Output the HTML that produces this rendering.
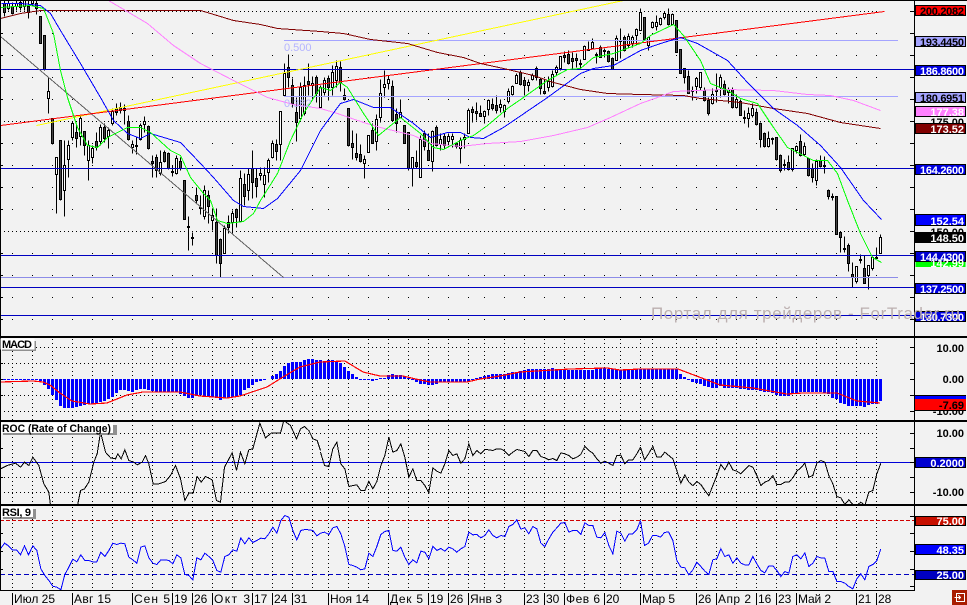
<!DOCTYPE html>
<html>
<head>
<meta charset="utf-8">
<title>Chart</title>
<style>
html,body{margin:0;padding:0;background:#f2f2f2;width:967px;height:605px;overflow:hidden}
svg{display:block;font-family:"Liberation Sans",sans-serif}
.l{font-weight:bold;font-size:11px;text-anchor:end}
.t{font-size:12px;fill:#000}
.p{fill:none;shape-rendering:crispEdges}
</style>
</head>
<body>
<svg width="967" height="605" viewBox="0 0 967 605" xmlns="http://www.w3.org/2000/svg">
<defs>
<clipPath id="cm"><rect x="1" y="1" width="913" height="335"/></clipPath>
<clipPath id="c1"><rect x="1" y="339" width="913" height="81"/></clipPath>
<clipPath id="c2"><rect x="1" y="422" width="913" height="82"/></clipPath>
<clipPath id="c3"><rect x="1" y="506" width="913" height="84"/></clipPath>
<path id="g" d="M12.5 0V590M32.5 0V590M52.5 0V590M72.5 0V590M92.5 0V590M112.5 0V590M132.5 0V590M152.5 0V590M172.5 0V590M192.5 0V590M212.5 0V590M232.5 0V590M252.5 0V590M272.5 0V590M292.5 0V590M312.5 0V590M328.5 0V590M348.5 0V590M368.5 0V590M388.5 0V590M408.5 0V590M428.5 0V590M448.5 0V590M468.5 0V590M484.5 0V590M504.5 0V590M524.5 0V590M544.5 0V590M564.5 0V590M584.5 0V590M604.5 0V590M620.5 0V590M640.5 0V590M652.5 0V590M676.5 0V590M696.5 0V590M716.5 0V590M736.5 0V590M756.5 0V590M776.5 0V590M796.5 0V590M816.5 0V590M836.5 0V590M856.5 0V590M876.5 0V590"/>
</defs>
<rect width="967" height="605" fill="#f2f2f2"/>

<!-- dot grids -->
<g clip-path="url(#cm)"><use href="#g" stroke="#000" fill="none" stroke-dasharray="1 21" stroke-dashoffset="11"/></g>
<g clip-path="url(#c1)"><use href="#g" stroke="#000" fill="none" stroke-dasharray="1 3" stroke-dashoffset="1"/></g>
<g clip-path="url(#c2)"><use href="#g" stroke="#000" fill="none" stroke-dasharray="1 3" stroke-dashoffset="3"/></g>
<g clip-path="url(#c3)"><use href="#g" stroke="#000" fill="none" stroke-dasharray="1 3" stroke-dashoffset="1"/></g>
<path d="M0 11.5H880M0 121.5H880M0 231.5H880M0 347.5H880M0 363.5H880M0 395.5H880M0 411.5H880M0 433.5H880M0 477.5H880M0 492.5H880" stroke="#000" fill="none" stroke-dasharray="1 3"/>

<!-- main panel -->
<g clip-path="url(#cm)">
<g transform="translate(.5 .5)" class="p">
<!-- wicks -->
<path stroke="#000" d="M4 0V16M8 0V10M12 2V14M16 0V10M20 0V10M24 0V10M28 0V18M32 0V5M36 0V14M40 16V43M44 35V70M48 77V113M52 118V144M56 157V213M60 140V200M64 140V216M68 140V177M72 121V140M76 123V147M80 114V145M84 131V155M88 140V180M92 145V163M96 132V150M100 124V145M104 123V142M108 127V148M112 108V125M116 103V115M120 102V113M124 104V124M128 115V140M132 140V153M136 136V154M140 123V140M144 116V132M148 125V149M152 155V177M156 154V177M160 150V175M164 150V162M168 152V169M172 165V176M176 155V174M180 157V170M184 180V219M188 216V250M192 232V245M196 187V203M200 195V214M204 185V219M208 190V223M212 208V230M216 208V263M220 238V277M224 225V253M228 215V233M232 210V233M236 208V227M240 170V222M244 173V205M248 168V200M252 150V198M256 168V197M260 167V180M264 167V197M268 158V182M272 140V158M276 139V160M280 111V160M284 63V95M288 54V87M292 78V107M296 97V141M300 82V118M304 76V115M308 63V95M312 76V100M316 75V102M320 85V107M324 77V95M328 75V100M332 65V95M336 60V87M340 61V91M344 88V100M348 108V146M352 130V159M356 133V160M360 144V162M364 155V178M368 135V152M372 123V143M376 114V150M380 79V122M384 70V97M388 75V89M392 80V121M396 108V132M400 99V118M404 125V143M408 132V170M412 157V186M416 150V168M420 135V177M424 130V150M428 133V160M432 130V171M436 125V146M440 133V150M444 133V148M448 133V147M452 133V147M456 142V148M460 137V163M464 133V148M468 108V133M472 106V122M476 102V120M480 105V116M484 110V123M488 99V115M492 98V110M496 95V113M500 99V112M504 104V117M508 88V103M512 85V95M516 73V83M520 70V85M524 77V95M528 79V91M532 73V80M536 66V80M540 77V94M544 79V94M548 76V91M552 70V87M556 65V75M560 56V70M564 51V62M568 50V64M572 52V68M576 53V67M580 59V68M584 45V59M588 41V50M592 38V48M596 52V63M600 45V57M604 48V57M608 50V62M612 57V69M616 35V60M620 28V58M624 35V51M628 33V48M632 35V47M636 28V45M640 8V30M644 17V40M648 36V50M652 21V28M656 15V30M660 17V25M664 11V19M668 8V25M672 13V25M676 20V52M680 49V73M684 68V83M688 70V93M692 86V100M696 77V93M700 72V90M704 87V101M708 97V115M712 88V104M716 73V102M720 74V97M724 80V95M728 87V103M732 87V108M736 94V108M740 99V115M744 110V123M748 107V127M752 103V117M756 108V125M760 122V147M764 132V147M768 131V147M772 137V144M776 137V160M780 154V172M784 159V170M788 155V170M792 148V171M796 145V153M800 134V156M804 142V155M808 158V176M812 163V182M816 159V185M820 155V167M824 156V173M828 189V199M832 193V200M836 196V234M840 232V252M844 236V252M848 243V271M852 262V287M856 266V283M860 254V263M864 255V283M868 265V289M872 256V270M876 247V258M880 234V253"/>
<!-- black bodies -->
<path stroke="#000" fill="#444" d="M3 3h2V12h-2zM11 6h2V13h-2zM19 2h2V7h-2zM27 6h2V12h-2zM35 3h2V8h-2zM39 16h2V43h-2zM43 35h2V69h-2zM51 118h2V143h-2zM59 140h2V199h-2zM75 132h2V138h-2zM83 131h2V145h-2zM95 141h2V147h-2zM103 127h2V138h-2zM115 108h2V112h-2zM119 107h2V110h-2zM123 108h2V110h-2zM127 121h2V139h-2zM135 145h2V146h-2zM147 126h2V148h-2zM151 161h2V163h-2zM155 157h2V170h-2zM163 152h2V161h-2zM167 153h2V168h-2zM171 171h2V172h-2zM179 161h2V168h-2zM183 180h2V219h-2zM187 226h2V227h-2zM191 237h2V238h-2zM195 195h2V200h-2zM199 207h2V208h-2zM207 195h2V206h-2zM215 222h2V255h-2zM219 239h2V263h-2zM227 222h2V227h-2zM235 209h2V217h-2zM243 184h2V196h-2zM251 168h2V182h-2zM255 178h2V186h-2zM275 144h2V151h-2zM287 67h2V77h-2zM291 85h2V103h-2zM295 112h2V122h-2zM307 81h2V84h-2zM315 77h2V93h-2zM327 78h2V87h-2zM339 67h2V82h-2zM343 95h2V99h-2zM347 108h2V145h-2zM351 143h2V147h-2zM355 153h2V157h-2zM359 154h2V161h-2zM371 130h2V143h-2zM391 86h2V120h-2zM395 114h2V123h-2zM403 125h2V143h-2zM407 132h2V168h-2zM415 162h2V166h-2zM423 133h2V146h-2zM427 150h2V160h-2zM435 127h2V145h-2zM443 136h2V145h-2zM455 143h2V146h-2zM471 109h2V112h-2zM475 111h2V113h-2zM479 113h2V116h-2zM491 104h2V108h-2zM495 105h2V110h-2zM519 72h2V84h-2zM523 80h2V85h-2zM535 68h2V77h-2zM539 79h2V88h-2zM543 91h2V93h-2zM563 55h2V57h-2zM567 54h2V63h-2zM571 58h2V61h-2zM575 58h2V60h-2zM579 63h2V64h-2zM587 49h2V50h-2zM595 54h2V55h-2zM599 47h2V57h-2zM603 50h2V51h-2zM607 51h2V61h-2zM611 58h2V69h-2zM619 40h2V41h-2zM623 37h2V50h-2zM643 17h2V39h-2zM667 14h2V24h-2zM675 20h2V52h-2zM679 49h2V73h-2zM683 68h2V77h-2zM687 76h2V93h-2zM691 90h2V91h-2zM703 90h2V100h-2zM707 100h2V113h-2zM715 90h2V91h-2zM723 84h2V94h-2zM731 89h2V107h-2zM739 101h2V115h-2zM743 117h2V118h-2zM755 112h2V124h-2zM759 123h2V139h-2zM763 133h2V146h-2zM771 138h2V139h-2zM775 137h2V159h-2zM779 155h2V170h-2zM783 164h2V165h-2zM787 162h2V169h-2zM799 141h2V155h-2zM807 158h2V175h-2zM811 168h2V177h-2zM819 160h2V166h-2zM823 165h2V166h-2zM827 190h2V196h-2zM831 196h2V197h-2zM835 196h2V234h-2zM839 232h2V237h-2zM843 248h2V249h-2zM847 245h2V263h-2zM851 274h2V277h-2zM859 259h2V260h-2zM863 268h2V283h-2zM875 257h2V258h-2z"/>
<!-- white bodies -->
<path stroke="#000" fill="#fff" d="M7 3h2V8h-2zM15 3h2V6h-2zM23 0h2V6h-2zM31 0h2V3h-2zM47 91h2V98h-2zM55 157h2V174h-2zM63 165h2V190h-2zM67 145h2V159h-2zM71 123h2V137h-2zM79 118h2V136h-2zM87 145h2V160h-2zM91 148h2V157h-2zM99 127h2V141h-2zM107 130h2V136h-2zM111 111h2V123h-2zM131 144h2V147h-2zM139 125h2V139h-2zM143 121h2V124h-2zM159 162h2V173h-2zM175 158h2V173h-2zM203 190h2V216h-2zM211 215h2V220h-2zM223 228h2V253h-2zM231 213h2V222h-2zM239 178h2V221h-2zM247 174h2V190h-2zM259 173h2V175h-2zM263 175h2V184h-2zM267 160h2V172h-2zM271 143h2V157h-2zM279 111h2V144h-2zM283 73h2V95h-2zM299 87h2V118h-2zM303 85h2V113h-2zM311 83h2V85h-2zM319 87h2V107h-2zM323 80h2V92h-2zM331 72h2V87h-2zM335 66h2V80h-2zM363 159h2V163h-2zM367 135h2V152h-2zM375 119h2V141h-2zM379 93h2V117h-2zM383 84h2V87h-2zM387 79h2V83h-2zM399 112h2V117h-2zM411 157h2V168h-2zM419 139h2V177h-2zM431 131h2V161h-2zM439 139h2V144h-2zM447 136h2V141h-2zM451 136h2V139h-2zM459 140h2V148h-2zM463 137h2V139h-2zM467 110h2V133h-2zM483 111h2V116h-2zM487 100h2V109h-2zM499 104h2V107h-2zM503 105h2V111h-2zM507 91h2V101h-2zM511 86h2V94h-2zM515 75h2V83h-2zM527 82h2V85h-2zM531 75h2V79h-2zM547 81h2V87h-2zM551 74h2V86h-2zM555 67h2V72h-2zM559 56h2V68h-2zM583 46h2V59h-2zM591 42h2V48h-2zM615 38h2V60h-2zM627 36h2V45h-2zM631 37h2V43h-2zM635 29h2V35h-2zM639 12h2V30h-2zM647 37h2V45h-2zM651 22h2V27h-2zM655 22h2V26h-2zM659 18h2V24h-2zM663 13h2V17h-2zM671 14h2V24h-2zM695 78h2V86h-2zM699 72h2V87h-2zM711 94h2V103h-2zM719 77h2V87h-2zM727 89h2V92h-2zM735 99h2V107h-2zM747 113h2V118h-2zM751 108h2V115h-2zM767 138h2V146h-2zM791 148h2V169h-2zM795 146h2V150h-2zM803 146h2V154h-2zM815 161h2V180h-2zM855 266h2V281h-2zM867 265h2V275h-2zM871 257h2V268h-2zM879 237h2V253h-2z"/>
</g>

<!-- horizontal levels -->
<g class="p">
<path d="M284 40.5H898M284 96.5H898" stroke="#a4a4ff"/>
<path d="M0 277.5H898" stroke="#8c8ce8"/>
<path d="M0 69.5H914M0 168.5H914M0 255.5H914M0 287.5H914M0 315.5H914" stroke="#0000c0"/>
</g>
<g fill="none" transform="translate(.5 .5)">
<path d="M0 36L283 277" stroke="#606060" shape-rendering="crispEdges"/>
<path d="M36 125L623 0" stroke="#ffff00" shape-rendering="crispEdges"/>
<path d="M0 125L884 11" stroke="#ff0000" shape-rendering="crispEdges"/>
<polyline stroke="#800000" shape-rendering="crispEdges" points="0,18 20,13 40,10 200,10 210,13 233,20 260,24 277,28 320,31 343,33 370,39 407,43 437,52 463,57 480,63 503,68 533,75 553,82 580,89 607,93 640,94 683,95 700,98 740,102 773,108 807,113 840,122 880,128"/>
<polyline stroke="#ff80ff" shape-rendering="crispEdges" points="108,0 147,23 173,45 200,63 233,80 267,97 293,104 320,108 337,113 363,122 380,127 413,135 430,143 460,146 487,143 520,141 553,135 587,127 610,117 640,103 657,97 673,91 723,89 773,90 807,94 830,95 853,100 880,110"/>
<polyline stroke="#0000ff" shape-rendering="crispEdges" points="1,3 20,3 40,5 50,13 60,30 80,63 100,97 113,120 127,133 140,138 150,133 180,142 200,163 213,177 233,200 243,206 263,208 277,198 300,170 320,130 340,103 353,99 373,107 390,107 413,123 430,137 447,132 460,132 470,137 483,138 503,127 547,97 580,73 593,68 613,65 640,50 660,43 680,37 697,43 727,60 747,82 773,108 797,125 820,145 840,167 863,200 881,219"/>
<polyline stroke="#00ff00" shape-rendering="crispEdges" points="0,7 30,5 43,8 53,33 60,70 67,97 77,127 87,145 97,147 107,137 127,127 140,127 150,132 170,150 180,155 190,177 203,193 210,200 217,220 227,223 243,221 253,213 260,200 277,173 290,140 303,113 320,87 330,90 340,82 347,87 363,113 378,135 400,117 420,133 433,147 443,149 460,140 473,135 487,125 507,108 523,97 547,80 567,69 580,68 593,57 613,53 640,43 650,35 673,24 683,35 700,60 710,83 727,90 740,98 757,103 773,127 787,147 807,157 813,160 827,160 837,173 847,200 860,233 872,257 881,262"/>
</g>
<text x="284" y="51" font-size="11" fill="#b4b4ff">0.500</text>
<text x="284" y="107" font-size="11" fill="#b4b4ff">0.382</text>
</g>

<!-- MACD -->
<g clip-path="url(#c1)">
<path class="p" stroke="#0000ff" stroke-width="3" transform="translate(.5 0)" d="M4 379V380M8 379V380M12 379V380M16 379V380M20 379V380M24 379V380M28 379V380M32 379V380M36 379V380M40 379V381M44 379V385M48 379V389M52 379V395M56 379V400M60 379V406M64 379V408M68 379V408M72 379V408M76 379V407M80 379V406M84 379V405M88 379V404M92 379V404M96 379V403M100 379V402M104 379V401M108 379V399M112 379V397M116 379V393M120 379V390M124 379V390M128 379V391M132 379V392M136 379V390M140 379V389M144 379V389M148 379V390M152 379V391M156 379V392M160 379V392M164 379V392M168 379V392M172 379V392M176 379V392M180 379V394M184 379V396M188 379V398M192 379V398M196 379V396M200 379V395M204 379V396M208 379V397M212 379V397M216 379V398M220 379V400M224 379V398M228 379V398M232 379V397M236 379V396M240 379V395M244 379V390M248 379V388M252 379V385M256 379V382M260 379V381M264 379V380M272 379V376M276 379V374M280 379V371M284 379V366M288 379V363M292 379V362M296 379V362M300 379V362M304 379V360M308 379V359M312 379V359M316 379V360M320 379V360M324 379V361M328 379V360M332 379V360M336 379V362M340 379V363M344 379V367M348 379V371M352 379V374M356 379V377M360 379V380M364 379V380M368 379V380M372 379V381M376 379V380M380 379V378M384 379V378M388 379V375M392 379V374M396 379V375M400 379V375M404 379V376M408 379V378M412 379V380M416 379V382M420 379V384M424 379V384M428 379V385M432 379V385M436 379V384M440 379V382M444 379V382M448 379V382M452 379V382M456 379V382M460 379V382M464 379V382M468 379V382M472 379V380M476 379V378M480 379V377M484 379V376M488 379V375M492 379V374M496 379V374M500 379V374M504 379V374M508 379V373M512 379V372M516 379V372M520 379V371M524 379V370M528 379V369M532 379V369M536 379V369M540 379V369M544 379V369M548 379V369M552 379V368M556 379V369M560 379V370M564 379V370M568 379V370M572 379V370M576 379V370M580 379V370M584 379V370M588 379V370M592 379V370M596 379V368M600 379V368M604 379V368M608 379V369M612 379V369M616 379V369M620 379V370M624 379V370M628 379V370M632 379V369M636 379V369M640 379V369M644 379V369M648 379V369M652 379V369M656 379V369M660 379V369M664 379V369M668 379V369M672 379V369M676 379V369M680 379V374M684 379V377M688 379V380M692 379V382M696 379V383M700 379V384M704 379V386M708 379V387M712 379V388M716 379V388M720 379V386M724 379V388M728 379V388M732 379V388M736 379V388M740 379V389M744 379V389M748 379V390M752 379V390M756 379V390M760 379V391M764 379V392M768 379V392M772 379V393M776 379V395M780 379V396M784 379V396M788 379V396M792 379V393M796 379V393M800 379V392M804 379V392M808 379V392M812 379V392M816 379V392M820 379V392M824 379V393M828 379V394M832 379V398M836 379V399M840 379V403M844 379V404M848 379V406M852 379V406M856 379V406M860 379V406M864 379V407M868 379V405M872 379V404M876 379V404M880 379V401"/>
<polyline fill="none" stroke="#ff0000" stroke-width="1.2" shape-rendering="crispEdges" points="0,382 33,381 43,382 50,385 60,393 72,401 90,404 107,403 127,395 143,392 180,392 200,396 227,398 240,396 267,387 283,377 300,367 320,362 345,361 363,372 380,376 403,376 420,380 430,382 467,382 480,379 500,376 520,372 553,370 570,369 607,368 620,370 640,369 678,369 707,380 720,385 753,388 787,394 803,393 837,393 857,401 880,403"/>
</g>

<!-- ROC -->
<g clip-path="url(#c2)">
<path class="p" d="M0 462.5H914" stroke="#0000d8"/>
<g fill="none" stroke="#000" stroke-width="3" shape-rendering="crispEdges">
<polyline transform="translate(.5 420.5) scale(.33333)" points="0,145 20,135 45,128 60,140 72,125 85,135 97,110 115,135 130,190 145,215 152,270 228,270 240,210 252,205 265,185 280,125 290,100 300,35 315,95 330,112 345,115 352,100 362,115 373,88 385,120 400,125 410,133 425,125 435,105 445,130 458,190 475,190 495,183 510,165 525,135 540,175 553,240 565,218 578,218 590,168 602,185 615,168 635,178 648,240 660,245 672,140 695,97 708,150 720,95 733,130 745,88 757,85 778,8 795,52 812,38 840,38 850,0 870,15 888,55 900,25 912,18 925,30 937,55 950,60 960,90"/>
<polyline transform="translate(320.5 420.5) scale(.33333)" points="0,95 12,135 25,138 37,85 49,65 61,130 73,145 85,198 97,195 109,193 121,210 133,210 145,183 157,205 169,183 181,135 193,105 205,50 217,95 229,90 241,70 253,110 265,170 277,145 289,180 301,180 313,195 325,217 337,142 349,152 361,158 373,130 385,90 397,105 409,100 421,128 433,115 445,70 457,105 469,90 481,100 493,87 505,88 517,90 529,85 541,85 553,92 565,105 577,95 589,87 601,90 613,93 625,108 637,90 649,90 661,108 673,112 685,118 697,114 709,120 721,97 733,100 745,105 757,115 769,110 781,102 793,78 805,90 817,98 829,115 841,128 853,122 865,128 877,135 889,105 901,104 913,130 925,118 937,118 949,100 960,80"/>
<polyline transform="translate(640.5 420.5) scale(.33333)" points="0,80 12,118 24,100 37,78 49,110 61,110 73,95 85,105 97,115 109,150 121,188 133,163 145,185 157,195 169,183 181,192 193,210 205,226 217,195 229,165 241,132 253,148 265,125 277,148 289,152 301,160 313,148 325,135 337,140 349,165 361,195 373,185 385,180 397,165 409,192 421,192 433,185 445,185 457,172 469,152 481,142 493,128 505,170 517,165 529,128 541,120 553,125 565,165 577,190 589,228 601,232 613,252 625,238 637,252 649,255 661,245 673,255 685,215 697,210 709,160 721,128"/>
</g>
</g>

<!-- RSI -->
<g clip-path="url(#c3)">
<path class="p" d="M0 520.5H914" stroke="#d00000" stroke-dasharray="4 2"/>
<path class="p" d="M0 574.5H914" stroke="#0000c0" stroke-dasharray="5 3"/>
<g fill="none" stroke="#0000ff" stroke-width="3" shape-rendering="crispEdges">
<polyline transform="translate(.5 420.5) scale(.33333)" points="0,385 12,368 24,376 36,388 48,388 60,403 72,376 84,403 97,376 109,390 121,445 133,465 145,480 157,497 169,500 181,508 193,462 205,440 217,416 229,424 241,403 253,420 265,420 277,424 289,424 301,395 313,408 325,390 337,368 349,372 361,368 373,370 385,410 397,418 409,428 421,380 433,376 445,412 457,428 469,432 481,418 493,418 505,420 517,430 529,403 541,412 553,462 565,465 577,478 589,412 601,418 613,398 625,408 637,420 649,450 661,455 673,408 685,403 697,388 709,392 721,352 733,370 745,352 757,366 769,360 781,353 793,355 805,340 817,320 829,338 841,300 853,285 865,290 877,330 889,358 901,330 913,327 925,328 937,330 949,346 960,338"/>
<polyline transform="translate(320.5 420.5) scale(.33333)" points="0,338 12,335 25,342 37,322 49,318 61,340 73,378 85,432 97,435 109,440 121,448 133,445 145,398 157,408 169,378 181,342 193,333 205,330 217,390 229,392 241,380 253,410 265,432 277,418 289,427 301,392 313,395 325,415 337,378 349,390 361,384 373,392 385,380 397,385 409,395 421,385 433,378 445,335 457,343 469,342 481,352 493,345 505,328 517,345 529,352 541,345 553,348 565,318 577,312 589,298 601,326 613,322 625,340 637,318 649,325 661,368 673,378 685,355 697,335 709,322 721,308 733,306 745,335 757,330 769,330 781,342 793,307 805,315 817,315 829,350 841,352 853,336 865,375 877,400 889,332 901,338 913,362 925,340 937,340 949,328 960,300"/>
<polyline transform="translate(640.5 420.5) scale(.33333)" points="0,300 12,375 24,368 36,345 48,345 60,350 72,336 84,334 97,360 109,420 121,440 133,442 145,463 157,448 169,425 181,438 193,452 205,462 217,418 229,415 241,385 253,408 265,403 277,428 289,412 301,428 313,433 325,433 337,408 349,430 361,450 373,457 385,436 397,436 409,450 421,468 433,453 445,458 457,408 469,403 481,415 493,397 505,438 517,428 529,408 541,412 553,413 565,453 577,453 589,483 601,483 613,488 625,498 637,505 649,475 661,460 673,478 685,438 697,432 709,420 721,385"/>
</g>
</g>

<!-- frames -->
<g fill="#000" shape-rendering="crispEdges">
<rect x="0" y="0" width="967" height="1"/>
<rect x="0" y="0" width="1" height="591"/>
<rect x="0" y="336" width="967" height="2"/>
<rect x="0" y="420" width="967" height="2"/>
<rect x="0" y="504" width="967" height="2"/>
<rect x="0" y="590" width="915" height="1"/>
<rect x="914" y="0" width="1" height="591"/>
</g>
<path class="p" stroke="#000" d="M910 11.5h4M910 33.5h4M910 55.5h4M910 77.5h4M910 99.5h4M910 121.5h4M910 143.5h4M910 165.5h4M910 187.5h4M910 209.5h4M910 231.5h4M910 253.5h4M910 275.5h4M910 297.5h4M910 319.5h4M910 347.5h4M910 363.5h4M910 379.5h4M910 395.5h4M910 411.5h4M910 433.5h4M910 448.5h4M910 462.5h4M910 477.5h4M910 492.5h4M910 516.5h4M910 533.5h4M910 551.5h4M910 569.5h4M910 586.5h4M1 33.5h2M1 55.5h2M1 77.5h2M1 99.5h2M1 143.5h2M1 165.5h2M1 187.5h2M1 209.5h2M1 253.5h2M1 275.5h2M1 297.5h2M1 319.5h2M1 363.5h2M1 379.5h2M1 395.5h2M1 448.5h2M1 477.5h2M1 533.5h2M1 551.5h2M1 569.5h2"/>

<!-- panel title tags -->
<g shape-rendering="crispEdges">
<rect x="2" y="341" width="34" height="10" fill="#909090"/>
<rect x="1" y="339" width="33" height="10" fill="#fff" stroke="#fff"/>
<rect x="3" y="425" width="114" height="10" fill="#909090"/>
<rect x="1" y="423" width="112" height="10" fill="#fff"/>
<rect x="3" y="509" width="33" height="10" fill="#909090"/>
<rect x="1" y="507" width="32" height="10" fill="#fff"/>
</g>
<g font-size="11" font-weight="bold" fill="#000">
<text x="2" y="348" textLength="30">MACD</text>
<text x="2" y="432" textLength="109" lengthAdjust="spacingAndGlyphs">ROC (Rate of Change)</text>
<text x="2" y="516" textLength="29">RSI, 9</text>
</g>

<!-- axis labels -->
<g shape-rendering="crispEdges" stroke="#000">
<rect x="915.5" y="5.5" width="50" height="10" fill="#ff0000"/>
<rect x="915.5" y="36.5" width="50" height="10" fill="#a4a4ff"/>
<rect x="915.5" y="65.5" width="50" height="10" fill="#0000e0"/>
<rect x="915.5" y="92.5" width="50" height="10" fill="#a4a4ff"/>
<rect x="915.5" y="106.5" width="50" height="10" fill="#ff80ff"/>
</g>
<text class="l" x="964" y="126" fill="#000">175.00</text>
<text class="l" x="964" y="236" fill="#000">150.00</text>
<g shape-rendering="crispEdges" stroke="#000">
<rect x="915.5" y="123.5" width="50" height="10" fill="#800000"/>
<rect x="915.5" y="164.5" width="50" height="10" fill="#0000e0"/>
<rect x="915.5" y="214.5" width="50" height="11" fill="#0000ff"/>
<rect x="915.5" y="232.5" width="50" height="10" fill="#000"/>
<rect x="915.5" y="262" width="50" height="5" fill="#00ff00" stroke="none"/>
<rect x="915.5" y="251.5" width="50" height="10" fill="#0000d0"/>
<rect x="915.5" y="283.5" width="50" height="10" fill="#0000e0"/>
<rect x="915.5" y="311.5" width="50" height="10" fill="#0000e0"/>
</g>
<text class="l" x="964" y="15" fill="#000" textLength="44">200.2082</text>
<text class="l" x="964" y="46" fill="#000" textLength="44">193.4450</text>
<text class="l" x="964" y="75" fill="#fff" textLength="44">186.8600</text>
<text class="l" x="964" y="102" fill="#000" textLength="44">180.6951</text>
<text class="l" x="964" y="116" fill="#fff">177.38</text>
<text class="l" x="964" y="133" fill="#fff">173.52</text>
<text class="l" x="964" y="174" fill="#fff" textLength="44">164.2600</text>
<text class="l" x="964" y="225" fill="#fff">152.54</text>
<text class="l" x="964" y="242" fill="#fff">148.50</text>
<text class="l" x="964" y="261" fill="#fff" textLength="44">144.4300</text>
<text class="l" x="964" y="267" fill="#fff" style="clip-path:inset(0 0 1px 0)">142.99</text>
<text class="l" x="964" y="293" fill="#fff" textLength="44">137.2500</text>
<text class="l" x="964" y="321" fill="#fff" textLength="44">130.7300</text>

<text class="l" x="964" y="352" fill="#000">10.00</text>
<text class="l" x="964" y="383" fill="#000">0.00</text>
<text class="l" x="964" y="415" fill="#000">-10.00</text>
<g shape-rendering="crispEdges">
<rect x="915" y="396" width="51" height="3" fill="#0000ff"/>
<rect x="915" y="399" width="51" height="11" fill="#ff0000"/>
<rect x="915" y="410" width="51" height="1" fill="#000"/>
<rect x="915" y="395" width="51" height="1" fill="#000"/>
</g>
<text class="l" x="964" y="409" fill="#000">-7.69</text>

<text class="l" x="964" y="437" fill="#000">10.00</text>
<text class="l" x="964" y="496" fill="#000">-10.00</text>
<rect x="915.5" y="457.5" width="50" height="10" fill="#0000d0" stroke="#000" shape-rendering="crispEdges"/>
<text class="l" x="964" y="467" fill="#fff">0.2000</text>

<g shape-rendering="crispEdges" stroke="#000">
<rect x="915.5" y="516.5" width="50" height="9" fill="#c81000"/>
<rect x="915.5" y="544.5" width="50" height="10" fill="#0000ff"/>
<rect x="915.5" y="570.5" width="50" height="9" fill="#0000c0"/>
</g>
<text class="l" x="964" y="525" fill="#fff">75.00</text>
<text class="l" x="964" y="554" fill="#fff">48.35</text>
<text class="l" x="964" y="579" fill="#fff">25.00</text>

<!-- watermark -->
<text x="651" y="319" font-size="17" fill="#bcb0b0" textLength="309">Портал для трейдеров - ForTrader.ru</text>

<!-- time axis -->
<path class="p" stroke="#000" d="M12.5 593V605M72.5 593V605M132.5 593V605M172.5 593V605M192.5 593V605M212.5 593V605M252.5 593V605M272.5 593V605M292.5 593V605M328.5 593V605M388.5 593V605M428.5 593V605M448.5 593V605M468.5 593V605M524.5 593V605M544.5 593V605M564.5 593V605M604.5 593V605M640.5 593V605M696.5 593V605M716.5 593V605M756.5 593V605M776.5 593V605M796.5 593V605M856.5 593V605M876.5 593V605"/>
<g class="t">
<text class="t" x="14" y="603" textLength="41">Июл 25</text>
<text class="t" x="74" y="603" textLength="37">Авг 15</text>
<text class="t" x="134" y="603" textLength="36">Сен 5</text>
<text class="t" x="174" y="603">19</text>
<text class="t" x="194" y="603">26</text>
<text class="t" x="214" y="603" textLength="36">Окт 3</text>
<text class="t" x="254" y="603">17</text>
<text class="t" x="274" y="603">24</text>
<text class="t" x="294" y="603">31</text>
<text class="t" x="330" y="603" textLength="39">Ноя 14</text>
<text class="t" x="390" y="603" textLength="33">Дек 5</text>
<text class="t" x="430" y="603">19</text>
<text class="t" x="450" y="603">26</text>
<text class="t" x="470" y="603" textLength="32">Янв 3</text>
<text class="t" x="526" y="603">23</text>
<text class="t" x="546" y="603">30</text>
<text class="t" x="566" y="603" textLength="34">Фев 6</text>
<text class="t" x="606" y="603">20</text>
<text class="t" x="642" y="603" textLength="33">Мар 5</text>
<text class="t" x="698" y="603">26</text>
<text class="t" x="718" y="603" textLength="33">Апр 2</text>
<text class="t" x="758" y="603">16</text>
<text class="t" x="778" y="603">23</text>
<text class="t" x="798" y="603" textLength="33">Май 2</text>
<text class="t" x="858" y="603">21</text>
<text class="t" x="878" y="603">28</text>
</g>

<!-- corner button -->
<rect x="952" y="590" width="15" height="15" fill="#a81c00" shape-rendering="crispEdges"/>
<path class="p" stroke="#fff" d="M956.5 593.5h8v8h-8zM954.5 597.5h6M958.5 595.5l2 2-2 2"/>
</svg>
</body>
</html>
